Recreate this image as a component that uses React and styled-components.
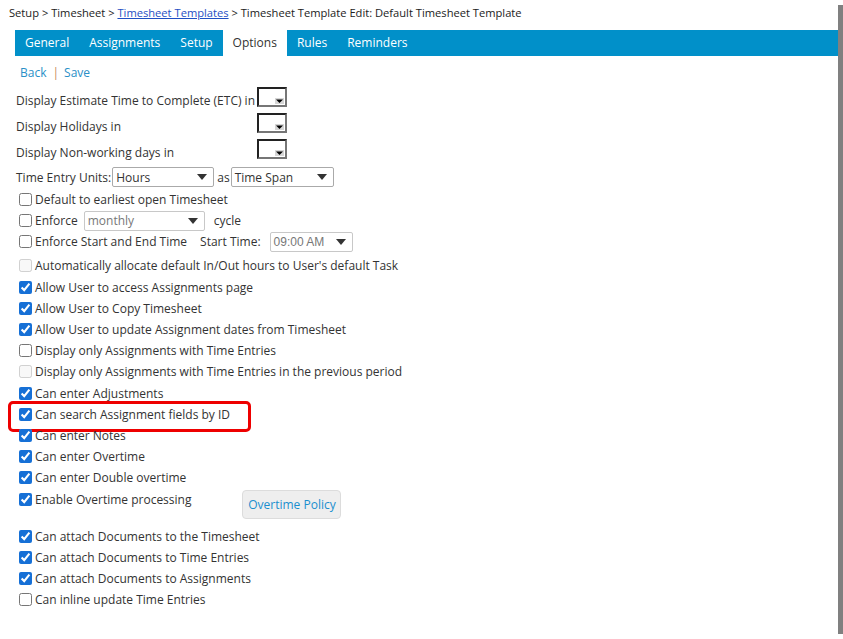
import React from 'react'
import styled, { createGlobalStyle } from 'styled-components';

const GlobalStyle = createGlobalStyle`
  html, body { margin: 0; padding: 0; background: #fff; }
  body { font-family: "Open Sans", "Liberation Sans", sans-serif; color: #333; }
`;

const Page = styled.div`
  width: 838px;
  height: 634px;
  background: #fff;
  box-shadow: 5px 5px 0 #808080;
  overflow: hidden;
`;

const Crumbs = styled.div`
  padding: 4px 9px 0;
  height: 30px;
  box-sizing: border-box;
  font-size: 11.15px;
  line-height: 18px;
  color: #222;
  a { color: #1f4fc4; text-decoration: underline; }
`;

const Body = styled.div`
  padding-left: 15px;
`;

const TabBar = styled.div`
  display: flex;
  height: 26px;
  background: #0190c9;
`;

const Tab = styled.div`
  padding: 0 10px;
  font-size: 12px;
  line-height: 26px;
  color: ${({ $active }) => ($active ? '#333' : '#fff')};
  background: ${({ $active }) => ($active ? '#fff' : 'transparent')};
`;

const Actions = styled.div`
  margin: 8px 0 5px 5px;
  font-size: 12px;
  line-height: 18px;
  color: #2a8fc7;
  .sep { color: #c98a5a; margin: 0 5px 0 6px; }
`;

const SmallRow = styled.div`
  display: grid;
  grid-template-columns: 241px auto;
  align-items: center;
  height: 26px;
  padding-left: 1px;
  font-size: 12px;
`;

const OldSelect = styled.div`
  width: 26px;
  height: 16px;
  border: 2px inset #ccc;
  border-top-color: #777;
  border-left-color: #777;
  border-right-color: #222;
  border-bottom-color: #222;
  display: flex;
  align-items: flex-end;
  justify-content: flex-end;
  margin-top: -6px;
  svg { display: block; margin: 0 1px 1px 0; }
`;

const FieldRow = styled.div`
  display: flex;
  align-items: ${({ $top }) => ($top ? 'flex-start' : 'center')};
  height: ${({ $h }) => $h || 21.2}px;
  padding-left: ${({ $flush }) => ($flush ? 0 : 1)}px;
  font-size: 12px;
  white-space: nowrap;
`;

const Inline = styled.span`
  margin-left: ${({ $ml }) => $ml || 0}px;
  line-height: 21.2px;
`;

const Select = styled.div`
  width: ${({ $w }) => $w}px;
  height: 20px;
  box-sizing: border-box;
  border: 1px solid ${({ $disabled }) => ($disabled ? '#c8c8c8' : '#aaa')};
  border-radius: 2px;
  margin: ${({ $m }) => $m || '0'};
  padding: 0 6px 0 3px;
  display: flex;
  align-items: center;
  justify-content: space-between;
  font-family: ${({ $arial }) => ($arial ? '"Liberation Sans", Arial, sans-serif' : 'inherit')};
  font-size: 12px;
  color: ${({ $disabled }) => ($disabled ? '#777' : '#333')};
  background: #fff;
`;

const CheckRow = styled.label`
  position: relative;
  display: flex;
  align-items: center;
  height: 21.2px;
  font-size: 12px;
  white-space: nowrap;
  input {
    width: 13px;
    height: 13px;
    margin: 0 3px 0 4px;
    accent-color: #1670d6;
  }
  ${({ $mark }) => $mark && `
    &::after {
      content: '';
      position: absolute;
      left: -7px;
      top: -3px;
      width: 243px;
      height: 31px;
      box-sizing: border-box;
      border: 3px solid #ee0000;
      border-radius: 5px;
      pointer-events: none;
    }
  `}
`;

const OvertimeRow = styled.div`
  display: flex;
  align-items: flex-start;
  height: 37px;
`;

const PolicyButton = styled.button`
  margin: 1.5px 0 0 51px;
  width: 99px;
  height: 29px;
  box-sizing: border-box;
  border: 1px solid #dcdcdc;
  border-radius: 4px;
  background: #eee;
  color: #1a8fcf;
  font-family: inherit;
  font-size: 12px;
  padding: 0;
`;

const Caret = ({ size = 10 }) => (
  <svg width={size} height={size * 0.6} viewBox="0 0 10 6">
    <path d="M0 0 L10 0 L5 6 Z" fill="#333" />
  </svg>
);

const TinyArrow = () => (
  <svg width="9" height="6" viewBox="0 0 9 6">
    <rect x="0" y="0" width="9" height="6" fill="#d6d6d6" />
    <path d="M1 1.5 L8 1.5 L4.5 5 Z" fill="#000" />
  </svg>
);

const Check = ({ label, checked, disabled, mark }) => (
  <CheckRow $mark={mark}>
    <input type="checkbox" defaultChecked={checked} disabled={disabled} />
    {label}
  </CheckRow>
);

const tabs = ['General', 'Assignments', 'Setup', 'Options', 'Rules', 'Reminders'];

const App = () => {
  return (
    <Page>
      <GlobalStyle />
      <Crumbs>
        Setup &gt; Timesheet &gt; <a>Timesheet Templates</a> &gt; Timesheet Template Edit: Default Timesheet Template
      </Crumbs>
      <Body>
        <TabBar>
          {tabs.map((t) => (
            <Tab key={t} $active={t === 'Options'}>{t}</Tab>
          ))}
        </TabBar>
        <Actions>
          Back<span className="sep">|</span>Save
        </Actions>

        <SmallRow>
          <span>Display Estimate Time to Complete (ETC) in</span>
          <OldSelect><TinyArrow /></OldSelect>
        </SmallRow>
        <SmallRow>
          <span>Display Holidays in</span>
          <OldSelect><TinyArrow /></OldSelect>
        </SmallRow>
        <SmallRow>
          <span>Display Non-working days in</span>
          <OldSelect><TinyArrow /></OldSelect>
        </SmallRow>

        <FieldRow $h={24}>
          Time Entry Units:
          <Select $w={102} $m="0 3px 0 1px">Hours<Caret /></Select>
          as
          <Select $w={103} $m="0 0 0 1px">Time Span<Caret /></Select>
        </FieldRow>

        <Check label="Default to earliest open Timesheet" />
        <FieldRow $flush>
          <Check label="Enforce" />
          <Select $w={121} $m="0 9px 0 6px" $disabled>monthly<Caret /></Select>
          cycle
        </FieldRow>
        <FieldRow $flush $top $h={24}>
          <Check label="Enforce Start and End Time" />
          <Inline $ml={13}>Start Time:</Inline>
          <Select $w={83} $m="1px 0 0 9px" $disabled $arial>09:00 AM<Caret /></Select>
        </FieldRow>

        <Check label="Automatically allocate default In/Out hours to User's default Task" disabled />
        <Check label="Allow User to access Assignments page" checked />
        <Check label="Allow User to Copy Timesheet" checked />
        <Check label="Allow User to update Assignment dates from Timesheet" checked />
        <Check label="Display only Assignments with Time Entries" />
        <Check label="Display only Assignments with Time Entries in the previous period" disabled />
        <Check label="Can enter Adjustments" checked />
        <Check label="Can search Assignment fields by ID" checked mark />
        <Check label="Can enter Notes" checked />
        <Check label="Can enter Overtime" checked />
        <Check label="Can enter Double overtime" checked />
        <OvertimeRow>
          <Check label="Enable Overtime processing" checked />
          <PolicyButton>Overtime Policy</PolicyButton>
        </OvertimeRow>
        <Check label="Can attach Documents to the Timesheet" checked />
        <Check label="Can attach Documents to Time Entries" checked />
        <Check label="Can attach Documents to Assignments" checked />
        <Check label="Can inline update Time Entries" />
      </Body>
    </Page>
  );
};

export default App
